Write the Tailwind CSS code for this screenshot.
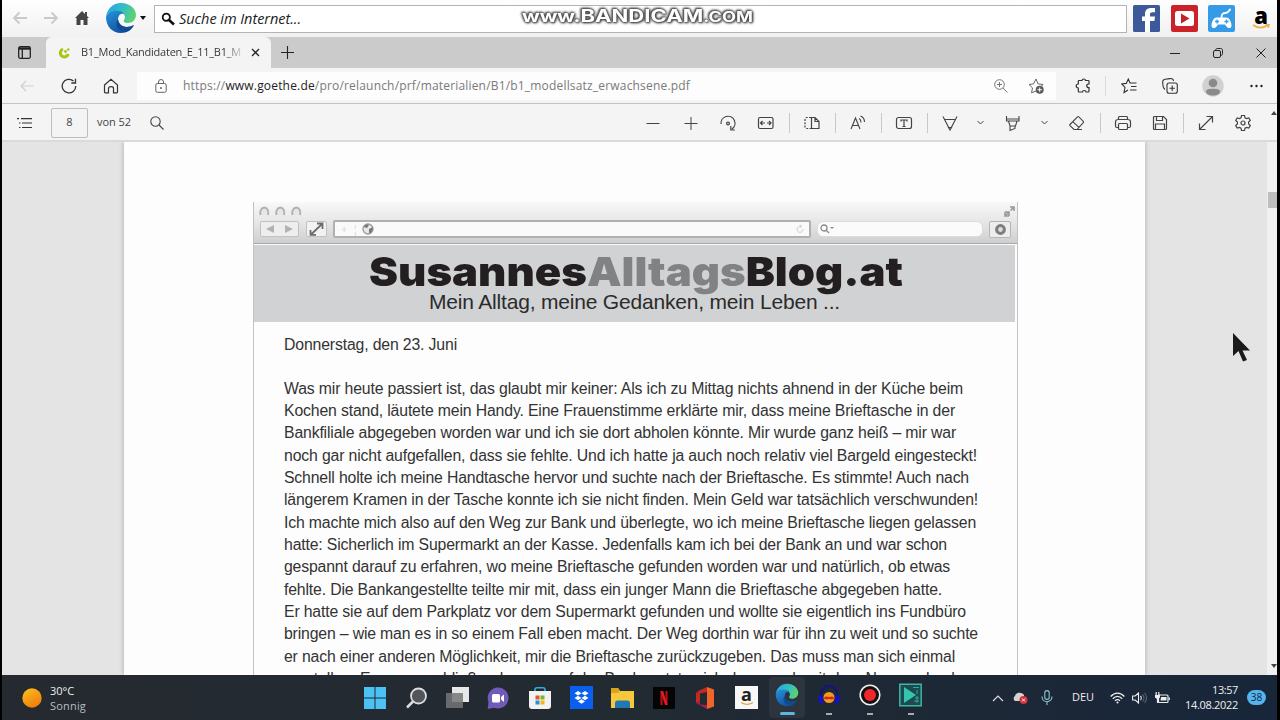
<!DOCTYPE html>
<html lang="de">

<head>
    <meta charset="UTF-8">
    <meta name="viewport" content="width=device-width, initial-scale=1.0">
    <title>B1_Mod_Kandidaten_E_11_B1_M</title>
    <script src="https://cdn.jsdelivr.net/npm/@tailwindcss/browser@4"></script>
</head>

<body class="bg-black overflow-hidden font-['Open_Sans','Noto_Sans',sans-serif]">

    <!-- shared edge logo -->
    <svg class="absolute w-0 h-0">
        <defs>
            <linearGradient id="edgeTop" x1="0" y1="0.3" x2="1" y2="0.6">
                <stop offset="0" stop-color="#2aa5e0" />
                <stop offset="0.5" stop-color="#32bfc4" />
                <stop offset="1" stop-color="#62d36a" />
            </linearGradient>
            <linearGradient id="edgeLow" x1="0" y1="0" x2="0.6" y2="1">
                <stop offset="0" stop-color="#2593dc" />
                <stop offset="1" stop-color="#124f9c" />
            </linearGradient>
            <linearGradient id="sun" x1="0" y1="0" x2="0.6" y2="1">
                <stop offset="0" stop-color="#fcc21c" />
                <stop offset="1" stop-color="#f07f0e" />
            </linearGradient>
            <symbol id="edge" viewBox="0 0 32 32">
                <path d="M1 15C2 7 8 1 16 1c9 0 15 6 15 12 0 5-4 8-8 8-3 0-5-1-4-3 2-2 1-7-4-8C9 8 3 10 1 15z" fill="url(#edgeTop)" />
                <path d="M1 15c2-5 7-7 12-6 3 0 5 1 6 3-4-1-6 2-6 6 1 5 5 7 9 7 3 0 5-1 7-2-2 5-7 8-13 8C7 31 1 24 1 15z" fill="url(#edgeLow)" />
                <path d="M13 17c-4 6 0 12 7 13 4-1 7-4 9-7-7 4-15 2-16-6z" fill="#0f4a94" />
            </symbol>
        </defs>
    </svg>

    <div class="w-[1280px] h-[720px] pl-[2px] pr-[3px] flex flex-col overflow-hidden relative">

        <!-- search bar -->
        <div class="h-[37px] shrink-0 flex items-center bg-gradient-to-b from-[#fefefe] to-[#f1f1f1] pb-px">
            <svg class="ml-[10px] w-4 h-4" viewBox="0 0 16 16" fill="none" stroke="#c9c9c9" stroke-width="1.8"><path d="M15 8H2M7.500 2.500L2 8l5.500 5.500" /></svg>
            <svg class="ml-[15px] w-4 h-4" viewBox="0 0 16 16" fill="none" stroke="#c9c9c9" stroke-width="1.800"><path d="M1 8h13M8.500 2.500L14 8l-5.500 5.500" /></svg>
            <svg class="ml-[15px] w-4 h-4" viewBox="0 0 16 16" fill="#454545"><path d="M8 1L1 8h1.500v7H6.500v-5h3v5h4V8H15l-2-2V2h-2v2z" /></svg>
            <svg class="ml-[15px] w-8 h-8" viewBox="0 0 32 32"><use href="#edge" /></svg>
            <svg class="ml-[3px] w-[6px] h-1" viewBox="0 0 6 4"><path d="M0 0h6L3 4z" fill="#111" /></svg>
            <div class="ml-[8px] w-[973px] h-[28px] mt-[2px] bg-white border border-[#b4b4b4] flex items-center pl-[6px]">
                <svg class="w-[14px] h-[14px]" viewBox="0 0 14 14" fill="none" stroke="#111"><circle cx="5.300" cy="5.200" r="3.600" stroke-width="1.800" /><path d="M8 8l5 4.500" stroke-width="2.600" /></svg>
                <span class="ml-[4px] text-[14.500px] italic text-[#222] whitespace-nowrap" data-w="122">Suche im Internet...</span>
            </div>
            <svg class="ml-[6px] mt-px w-[27px] h-[27px]" viewBox="0 0 27 27"><rect width="27" height="27" rx="1.500" fill="#3c5a9a" /><path d="M12 27V16H9v-4.500h3V9c0-4 2.500-6 6-6h4v4.300h-2.600c-1.600 0-2.400.7-2.400 2v2.200h5l-.6 4.500H17v11z" fill="#fff" /></svg>
            <svg class="ml-[11px] mt-px w-[27px] h-[27px]" viewBox="0 0 27 27"><rect width="27" height="27" rx="2" fill="#cc2229" /><rect x="4" y="6" width="19" height="15" rx="2.500" fill="#fff" /><path d="M10 8.500l8.500 5-8.500 5z" fill="#c4202a" /></svg>
            <svg class="ml-[10px] mt-px w-[27px] h-[27px]" viewBox="0 0 27 27"><rect width="27" height="27" rx="2" fill="#359be6" /><path d="M13.500 13c0-4 1-5 4-5s3-2 5-4" fill="none" stroke="#fff" stroke-width="1.800" /><path d="M8.500 12.500c-3 0-5 5-5 8s3 3.500 5 1l1.500-2h7l1.500 2c2 2.500 5 2 5-1s-2-8-5-8z" fill="#fff" /><path d="M7 16.500h4M9 14.500v4M16.500 16.500h4M18.500 14.500v4" stroke="#359be6" stroke-width="1.300" /></svg>
            <div class="ml-[14px] w-[24px] h-[28px] flex flex-col items-center">
                <span class="font-['Open_Sans'] font-extrabold text-[22px] leading-[22px] text-black">a</span>
                <svg class="-mt-[2px] w-[18px] h-[5px] shrink-0" viewBox="0 0 18 5" fill="none" stroke="#e9b04f" stroke-width="1.600"><path d="M1 1c5 3.500 10 3.500 15 0M13.500.8h3.500l-1 3" /></svg>
            </div>
        </div>

        <!-- tab strip -->
        <div class="h-[31px] shrink-0 flex items-center bg-[#cbcbcb]">
            <svg class="ml-[16px] w-[13px] h-[13px]" viewBox="0 0 13 13" fill="none" stroke="#222" stroke-width="1.300"><rect x=".7" y=".7" width="11.600" height="11.600" rx="1.500" /><path d="M1 2.500h11" stroke-width="2.400" /><path d="M4.300 3v9" /></svg>
            <div class="ml-[15px] w-[225px] h-full bg-[#f4f4f4] rounded-t-md flex items-center">
                <svg class="ml-[12px] w-[12px] h-[12px]" viewBox="0 0 12 12"><path d="M5 2.200A4 4 0 1 0 10.200 7" fill="none" stroke="#a3c614" stroke-width="3" /><circle cx="7.500" cy="4.500" r="1.400" fill="#a3c614" /><circle cx="10.300" cy="2.500" r="1.200" fill="#a3c614" /></svg>
                <div class="ml-[11px] w-[162px] bg-gradient-to-r from-[#333] from-88% to-[#e4e4e4] bg-clip-text text-transparent"><span class="block w-fit text-[11px] whitespace-nowrap" data-w="160">B1_Mod_Kandidaten_E_11_B1_M</span></div>
                <svg class="ml-[8px] w-[9px] h-[9px]" viewBox="0 0 9 9" stroke="#222" stroke-width="1.300"><path d="M1 1l7 7M8 1L1 8" /></svg>
            </div>
            <svg class="ml-[10px] w-[13px] h-[13px]" viewBox="0 0 13 13" stroke="#222" stroke-width="1.100"><path d="M6.500 0v13M0 6.500h13" /></svg>
            <svg class="ml-auto w-[10px] h-[10px]" viewBox="0 0 10 10" stroke="#222"><path d="M0 5.500h10" /></svg>
            <svg class="ml-[33px] w-[10px] h-[10px]" viewBox="0 0 10 10" fill="none" stroke="#222"><rect x=".5" y="2.500" width="7" height="7" rx="1.500" /><path d="M2.500 2.500c0-1 .5-2 2-2h3c1.500 0 2 .8 2 2v3c0 1-.5 2-2 2" /></svg>
            <svg class="ml-[33px] mr-[11px] w-[10px] h-[10px]" viewBox="0 0 10 10" stroke="#222"><path d="M.5.500l9 9M9.500.500l-9 9" /></svg>
        </div>

        <!-- address row -->
        <div class="h-[36px] shrink-0 flex items-center bg-[#f4f4f4] border-b border-[#c3c3c3] text-[#333]">
            <svg class="ml-[18px] w-[14px] h-[12px]" viewBox="0 0 14 12" fill="none" stroke="#cfcfcf" stroke-width="1.200"><path d="M14 6H1M6 1L1 6l5 5" /></svg>
            <svg class="ml-[27px] w-4 h-4" viewBox="0 0 16 16" fill="none" stroke="currentColor" stroke-width="1.300"><path d="M14.800 8A6.800 6.800 0 1 1 12.500 3M14.500.8V5h-4.200" /></svg>
            <svg class="ml-[26px] w-4 h-4" viewBox="0 0 16 16" fill="none" stroke="currentColor" stroke-width="1.200"><path d="M1.500 7L8 1.300 14.500 7v7c0 .5-.3.800-.8.800H10.500V10.500c0-1.200-.8-1.800-2.500-1.800s-2.500.6-2.500 1.800v4.300H2.300c-.5 0-.8-.3-.8-.8z" /></svg>
            <div class="ml-[18px] w-[919px] h-[28px] bg-[#fdfdfd] flex items-center">
                <svg class="ml-[18px] w-3 h-[14px]" viewBox="0 0 12 14" fill="none" stroke="#666"><rect x=".8" y="4.500" width="10.400" height="8.800" rx="1.500" /><path d="M3.500 4.500V3a2.500 2.500 0 0 1 5 0v1.500" /><circle cx="6" cy="9" r=".6" fill="#666" /></svg>
                <span class="ml-[16px] text-xs text-[#7a7a7a] whitespace-nowrap" data-w="507">https://<b class="font-normal text-[#222]">www.goethe.de</b>/pro/relaunch/prf/materialien/B1/b1_modellsatz_erwachsene.pdf</span>
                <svg class="ml-auto w-[14px] h-[14px]" viewBox="0 0 14 14" fill="none" stroke="#777"><circle cx="5.500" cy="5.500" r="4.800" /><path d="M9 9l4.500 4.500M5.500 3v5M3 5.500h5" /></svg>
                <svg class="ml-[20px] mr-[12px] w-4 h-4" viewBox="0 0 16 16" fill="none" stroke="#666"><path d="M8 13l-4.500 1.800 1-4.900L1 6.500l4.500-.600L8 1l2 4.900 5 .6-1.500 1.500" /><circle cx="11.700" cy="11.700" r="4" fill="#5a5a5a" stroke="none" /><path d="M11.700 9.500v4.400M9.500 11.700h4.400" stroke="#fff" /></svg>
            </div>
            <svg class="ml-[19px] w-4 h-4" viewBox="0 0 16 16" fill="none" stroke="currentColor" stroke-width="1.200"><path d="M4 2.500h3c0-2 3.500-2 3.500 0h2.800c.4 0 .7.300.7.700v2.600c-3 0-3 3.900 0 3.900v3.600c0 .4-.3.700-.7.700H11c0-2-3.500-2-3.500 0H4c-.4 0-.7-.3-.7-.7V10C.5 10 .5 6 3.300 6V3.200c0-.4.3-.7.700-.7z" /></svg>
            <i class="ml-[14px] w-px h-5 bg-[#dadada]"></i>
            <svg class="ml-[15px] w-4 h-4" viewBox="0 0 16 16" fill="none" stroke="currentColor" stroke-width="1.100"><path d="M7 12l-4 2.500 1-5L.8 6l4.500-.6L7.300 1 9 5h6.500M10 8.500h5.500M9 12h6.500" /></svg>
            <svg class="ml-[25px] w-4 h-4" viewBox="0 0 16 16" fill="none" stroke="currentColor" stroke-width="1.100"><rect x="5" y="5" width="10.300" height="10.300" rx="2" /><path d="M10.200 7.500v5.400M7.500 10.200h5.400M3 11.500C1.500 10.500.7 7 .7 4 .7 2 1.500 1.500 3 1.200L8 .6c2-.2 3.500.6 3.500 2.400" /></svg>
            <svg class="ml-[24px] w-[22px] h-[22px]" viewBox="0 0 22 22"><circle cx="11" cy="11" r="10.700" fill="#d0d0d0" /><circle cx="11" cy="8" r="4.300" fill="#8a8a8a" /><path d="M4 16c0-3 14-3 14 0 0 3-3 4.500-7 4.500S4 19 4 16z" fill="#8a8a8a" /></svg>
            <svg class="ml-[26px] w-[13px] h-1" viewBox="0 0 13 4" fill="#222"><circle cx="1.500" cy="2" r="1.200" /><circle cx="6.500" cy="2" r="1.200" /><circle cx="11.500" cy="2" r="1.200" /></svg>
        </div>

        <!-- pdf toolbar -->
        <div class="h-[38px] shrink-0 flex items-center bg-[#f4f4f4] border-b-2 border-[#dadada] text-[#444] pt-px">
            <svg class="ml-[15px] w-4 h-3" viewBox="0 0 16 12" stroke="#333" stroke-width="1.200"><path d="M4 1.600h11M5 6h10M5 10.500h10M0 1.600h2M2 6h1.500M2 10.500h1.500" /></svg>
            <div class="ml-[18px] w-[37px] h-[30px] border border-[#bdbdbd] rounded-xs flex items-center justify-center text-[11px]">8</div>
            <span class="ml-[9px] text-[11px] whitespace-nowrap" data-w="34">von 52</span>
            <svg class="ml-[19px] w-[14px] h-[14px]" viewBox="0 0 14 14" fill="none" stroke="currentColor" stroke-width="1.100"><circle cx="5.500" cy="5.500" r="4.700" /><path d="M9 9l4.500 4.500" /></svg>
            <svg class="ml-auto w-[18px] h-[18px]" viewBox="0 0 18 18" stroke="currentColor"><path d="M2.500 9.500h13" /></svg>
            <svg class="ml-[20px] w-[18px] h-[18px]" viewBox="0 0 18 18" stroke="currentColor"><path d="M2.500 9.500h13M9 3v13" /></svg>
            <svg class="ml-[19px] w-[18px] h-[18px]" viewBox="0 0 18 18" fill="none" stroke="currentColor" stroke-width="1.200"><path d="M2 10A7 7 0 1 1 13 15M11.800 12v4h4" /><circle cx="9" cy="9.500" r="1.400" /></svg>
            <svg class="ml-[20px] w-[18px] h-[18px]" viewBox="0 0 18 18" fill="none" stroke="currentColor" stroke-width="1.200"><rect x="1.500" y="3.500" width="14.500" height="11" rx="1.500" /><path d="M3.500 9H8M10 9h4M5.500 7l-2 2 2 2M12 7l2 2-2 2" /></svg>
            <i class="ml-[14px] w-px h-5 bg-[#c8c8c8]"></i>
            <svg class="ml-[13px] w-[18px] h-[18px]" viewBox="0 0 18 18" fill="none" stroke="currentColor" stroke-width="1.200"><path d="M8.500 3.500H12l4 4v7H8.500zM12 3.500v4h4" /><path d="M8 3.500H3.500A1.500 1.500 0 0 0 2 5v8a1.500 1.500 0 0 0 1.500 1.500H8" stroke-dasharray="2 1.300" /></svg>
            <i class="ml-[14px] w-px h-5 bg-[#c8c8c8]"></i>
            <svg class="ml-[13px] w-[18px] h-[18px]" viewBox="0 0 18 18" fill="none" stroke="currentColor" stroke-width="1.100"><path d="M2 15L6.500 4 11 15M3.500 11.500h6M10 4.500c1.500.7 2 2 2 4M11.500 2c2.500 1 4 3 4 6" /></svg>
            <i class="ml-[14px] w-px h-5 bg-[#c8c8c8]"></i>
            <svg class="ml-[13px] w-[18px] h-[18px]" viewBox="0 0 18 18" fill="none" stroke="currentColor" stroke-width="1.200"><rect x="1.500" y="3.500" width="15" height="11" rx="2" /><path d="M6 7.500V6h6v1.500M9 6v6.500M7.500 12.500h3" /></svg>
            <i class="ml-[14px] w-px h-5 bg-[#c8c8c8]"></i>
            <svg class="ml-[13px] w-[18px] h-[18px]" viewBox="0 0 18 18" fill="none" stroke="currentColor" stroke-width="1.100"><path d="M2 2.500L9 16l7-13.500M3 5.500h12M7.500 13.500L9 16l1.500-2.500z" /></svg>
            <svg class="ml-[17px] w-[9px] h-[9px]" viewBox="0 0 9 9" fill="none" stroke="currentColor"><path d="M1.500 3l3 3 3-3" /></svg>
            <svg class="ml-[19px] w-[18px] h-[18px]" viewBox="0 0 18 18" fill="none" stroke="currentColor" stroke-width="1.100"><path d="M2.500 2v5h12.500V2M2.500 5h12.500M4.500 7l1.500 5h5.500l1.500-5M6 12v4.500l5-2V12" /></svg>
            <svg class="ml-[18px] w-[9px] h-[9px]" viewBox="0 0 9 9" fill="none" stroke="currentColor"><path d="M1.500 3l3 3 3-3" /></svg>
            <svg class="ml-[19px] w-[18px] h-[18px]" viewBox="0 0 18 18" fill="none" stroke="currentColor" stroke-width="1.100"><path d="M2 10.500l7.500-7.700c.4-.4.900-.4 1.300 0l4.500 4.500c.4.400.4.900 0 1.300L9 15.500H6L2 11.700c-.4-.4-.4-.8 0-1.200zM5 7.800l6.200 5.800M9 15.500h5" /></svg>
            <i class="ml-[14px] w-px h-5 bg-[#c8c8c8]"></i>
            <svg class="ml-[13px] w-[18px] h-[18px]" viewBox="0 0 18 18" fill="none" stroke="currentColor" stroke-width="1.200"><path d="M4.500 5.500V3.500c0-.5.300-1 1-1h7c.7 0 1 .5 1 1v2M4.500 13.500H3c-1 0-1.500-.5-1.500-1.500V8C1.500 6.500 2.500 5.500 4 5.500h10c1.500 0 2.500 1 2.500 2.500v4c0 1-.5 1.500-1.500 1.500h-1.500" /><rect x="4.500" y="9.500" width="9" height="6" rx="1" /></svg>
            <svg class="ml-[19px] w-[18px] h-[18px]" viewBox="0 0 18 18" fill="none" stroke="currentColor" stroke-width="1.200"><path d="M3.500 2.500h9L15.500 5.500v9c0 .6-.4 1-1 1h-11c-.6 0-1-.4-1-1v-11c0-.6.400-1 1-1zM5.500 2.500V6.500h6v-4M4.500 15.500V10h9v5.500" /></svg>
            <i class="ml-[14px] w-px h-5 bg-[#c8c8c8]"></i>
            <svg class="ml-[13px] w-[18px] h-[18px]" viewBox="0 0 18 18" fill="none" stroke="currentColor" stroke-width="1.200"><path d="M2.500 15.500l13-13M9.500 2.500h6v6M2.500 9.500v6h6" /></svg>
            <svg class="ml-[19px] w-[18px] h-[18px]" viewBox="0 0 18 18" fill="none" stroke="currentColor" stroke-width="1.200"><path d="M7.500 1.500h3l.5 2.300 1.500.8 2.300-.7 1.500 2.500-1.700 1.700v1.800l1.700 1.700-1.500 2.500-2.300-.7-1.500.8-.5 2.300h-3L7 14.200l-1.500-.8-2.300.7-1.500-2.500 1.700-1.700V8.100L1.700 6.400l1.500-2.500 2.300.7L7 3.800z" /><circle cx="9" cy="9" r="2" /></svg>
            <svg class="ml-[19px] mb-[19px] w-[6px] h-1 shrink-0" viewBox="0 0 6 4"><path d="M0 4l3-4 3 4z" fill="#444" /></svg>
        </div>

        <!-- document viewport -->
        <div class="h-[533px] shrink-0 flex bg-[#e4e4e4] overflow-hidden">
            <div class="ml-[122px] w-[1021px] shrink-0 bg-[#fdfdfd] shadow-[0_0_5px_rgba(0,0,0,0.25)] pt-[60px] pl-[129px]">
                <div class="w-[765px] h-[600px] border-x border-[#c2c2c2]">

                    <!-- old browser chrome -->
                    <div class="h-[42px] bg-gradient-to-b from-[#f8f8f8] via-[#e6e6e6] to-[#cfcfcf] border-b border-[#a5a8a8]">
                        <div class="h-[18px] flex items-center pl-[5px]">
                            <svg class="w-[44px] h-[10px]" viewBox="0 0 44 10" fill="#e6e6e6" stroke="#b0b0b0" stroke-width="1.800"><path d="M1.500 9C.500 5 2.500 1.500 5.300 1.500S10 5 9 9M17.500 9C16.500 5 18.500 1.500 21.300 1.500S26 5 25 9M33.500 9C32.500 5 34.500 1.500 37.300 1.500S42 5 41 9" /></svg>
                            <svg class="ml-auto mr-[2px] w-[11px] h-[11px]" viewBox="0 0 11 11" fill="none" stroke="#999" stroke-width="1.600"><path d="M6 1h4v4M10 1L6.500 4.500M5 10H1V6M4.500 6.500L1 10M1 6h4v4" /></svg>
                        </div>
                        <div class="h-[18px] flex items-center">
                            <div class="ml-[6px] w-[39px] h-[16px] bg-[#eee] border border-[#c0c0c0] rounded-xs flex items-center justify-around">
                                <svg class="w-2 h-2" viewBox="0 0 8 8" fill="#b2b2b2"><path d="M8 0v8L0 4z" /></svg>
                                <svg class="w-2 h-2" viewBox="0 0 8 8" fill="#b2b2b2"><path d="M0 0v8l8-4z" /></svg>
                            </div>
                            <div class="ml-[7px] w-[21px] h-[16px] bg-[#f2f2f2] border border-[#c0c0c0] rounded-xs flex items-center justify-center">
                                <svg class="w-[15px] h-[14px]" viewBox="0 0 15 14" fill="none" stroke="#6c6c6c" stroke-width="1.800"><path d="M2 12.500L13 2M8 1.500h5.500V7M1.500 8v4.800H7" /></svg>
                            </div>
                            <div class="ml-[6px] w-[478px] h-[18px] bg-[#fafafa] border-2 border-[#b0b0b0] rounded-xs flex items-center text-[#d5d5d5] text-[11px]">
                                <span class="ml-[6px]">+</span>
                                <span class="ml-[5px]">¦</span>
                                <svg class="ml-[4px] w-3 h-3" viewBox="0 0 12 12"><circle cx="6" cy="6" r="5" fill="#e8e8e8" stroke="#9a9a9a" stroke-width="1.300" /><path d="M2 4c1-3 4-3 5-2L5 5zM7 6l4-2c0 4-2 6-4 6z" fill="#777" /></svg>
                                <svg class="ml-auto mr-[5px] w-2 h-[10px]" viewBox="0 0 8 10" fill="none" stroke="#ccc"><path d="M7 5A3 3 0 1 1 5 2.500M4 .5l1.500 2-2 1.500" /></svg>
                            </div>
                            <div class="ml-[6px] w-[166px] h-[16px] bg-[#fbfbfb] border border-[#dcdcdc] rounded-md flex items-center">
                                <svg class="ml-[2px] w-[14px] h-[10px]" viewBox="0 0 14 10" fill="none" stroke="#888" stroke-width="1.300"><circle cx="4" cy="4" r="3" /><path d="M6 6l3 3" /><path d="M10 3h4l-2 2z" fill="#888" stroke="none" /></svg>
                            </div>
                            <div class="ml-[6px] w-[22px] h-[17px] bg-[#ededed] border border-[#b5b5b5] rounded-xs flex items-center justify-center">
                                <svg class="w-[11px] h-[11px]" viewBox="0 0 11 11"><circle cx="5.500" cy="5.500" r="3.900" fill="#ddd" stroke="#7d7d7d" stroke-width="3" /></svg>
                            </div>
                        </div>
                    </div>

                    <div class="mt-px mr-[2px] h-[77px] bg-[#d0d2d3] flex flex-col font-['Liberation_Sans',sans-serif]">
                        <h1 class="ml-[115px] mt-[7px] w-fit origin-left font-['Inter',sans-serif] font-black text-[40px] leading-[40px] text-[#231f20] whitespace-nowrap" data-stretch="534">Susannes<span class="text-[#808284]">Alltags</span>Blog.at</h1>
                        <p class="ml-[175px] -mt-px w-fit text-[21px] leading-[22px] text-[#2b2b2b] whitespace-nowrap" data-w="411">Mein Alltag, meine Gedanken, mein Leben ...</p>
                    </div>

                    <div class="pl-[30px] pt-[11.500px] font-['Liberation_Sans',sans-serif] text-[15.800px] leading-[22.330px] text-[#333] whitespace-nowrap">
                        <p class="w-fit mb-[22px]" data-w="173">Donnerstag, den 23. Juni</p>
                        <p class="w-fit" data-w="679">Was mir heute passiert ist, das glaubt mir keiner: Als ich zu Mittag nichts ahnend in der Küche beim</p>
                        <p class="w-fit" data-w="671">Kochen stand, läutete mein Handy. Eine Frauenstimme erklärte mir, dass meine Brieftasche in der</p>
                        <p class="w-fit" data-w="672">Bankfiliale abgegeben worden war und ich sie dort abholen könnte. Mir wurde ganz heiß – mir war</p>
                        <p class="w-fit" data-w="693">noch gar nicht aufgefallen, dass sie fehlte. Und ich hatte ja auch noch relativ viel Bargeld eingesteckt!</p>
                        <p class="w-fit" data-w="685">Schnell holte ich meine Handtasche hervor und suchte nach der Brieftasche. Es stimmte! Auch nach</p>
                        <p class="w-fit" data-w="694">längerem Kramen in der Tasche konnte ich sie nicht finden. Mein Geld war tatsächlich verschwunden!</p>
                        <p class="w-fit" data-w="692">Ich machte mich also auf den Weg zur Bank und überlegte, wo ich meine Brieftasche liegen gelassen</p>
                        <p class="w-fit" data-w="663">hatte: Sicherlich im Supermarkt an der Kasse. Jedenfalls kam ich bei der Bank an und war schon</p>
                        <p class="w-fit" data-w="666">gespannt darauf zu erfahren, wo meine Brieftasche gefunden worden war und natürlich, ob etwas</p>
                        <p class="w-fit" data-w="658">fehlte. Die Bankangestellte teilte mir mit, dass ein junger Mann die Brieftasche abgegeben hatte.</p>
                        <p class="w-fit" data-w="682">Er hatte sie auf dem Parkplatz vor dem Supermarkt gefunden und wollte sie eigentlich ins Fundbüro</p>
                        <p class="w-fit" data-w="694">bringen – wie man es in so einem Fall eben macht. Der Weg dorthin war für ihn zu weit und so suchte</p>
                        <p class="w-fit" data-w="671">er nach einer anderen Möglichkeit, mir die Brieftasche zurückzugeben. Das muss man sich einmal</p>
                        <p class="w-fit" data-w="676">vorstellen: Er war anschließend sogar auf der Bank, setzte sich dann noch mit dem Namen durch</p>
                    </div>
                </div>
            </div>
            <!-- scrollbar -->
            <div class="ml-auto w-[10px] bg-[#f0f0f0] flex flex-col items-end">
                <div class="mt-[50px] w-[9px] h-4 bg-[#bdbdbd]"></div>
                <svg class="mt-auto mb-[7px] w-[6px] h-1" viewBox="0 0 6 4"><path d="M0 0h6L3 4z" fill="#444" /></svg>
            </div>
        </div>

        <!-- taskbar -->
        <div class="h-[45px] shrink-0 flex items-center bg-gradient-to-r from-[#252a30] via-[#222a32] to-[#18263a] text-[#eee]">
            <svg class="ml-[20px] w-5 h-5" viewBox="0 0 20 20"><circle cx="10" cy="10" r="9.700" fill="url(#sun)" /></svg>
            <div class="ml-[8px] w-[60px] text-[11px] leading-[15px]">
                <p class="w-fit whitespace-nowrap" data-w="24">30°C</p>
                <p class="w-fit whitespace-nowrap text-[#b9bcc0]" data-w="36">Sonnig</p>
            </div>
            <svg class="ml-[254px] w-[22px] h-[22px]" viewBox="0 0 22 22" fill="#4cc2f4"><path d="M0 0h10.500v10.500H0zM11.500 0H22v10.500H11.500zM0 11.500h10.500V22H0zM11.500 11.500H22V22H11.500z" /></svg>
            <svg class="ml-[20px] w-[22px] h-[22px]" viewBox="0 0 22 22" fill="none" stroke="#ddd"><circle cx="12.500" cy="9" r="7.500" fill="#50565c" stroke-width="1.800" /><path d="M7 14.500L1 20.500" stroke-width="2.500" /></svg>
            <svg class="ml-[18px] w-[23px] h-[22px]" viewBox="0 0 23 22"><path d="M6 0h17v15H6z" fill="#e8e8e8" /><path d="M0 6h17v15H0z" fill="#747678" fill-opacity=".85" /></svg>
            <svg class="ml-[18px] w-[22px] h-[22px]" viewBox="0 0 22 22"><path d="M11 .5a10.500 10.500 0 1 1-4 20.200L.7 22 1.500 15A10.500 10.500 0 0 1 11 .5z" fill="#6f5cb8" /><rect x="5" y="7" width="8" height="8.500" rx="1.500" fill="#fff" /><path d="M14 10l3-2.500v7.500l-3-2.500z" fill="#fff" /></svg>
            <svg class="ml-[20px] w-[22px] h-[22px]" viewBox="0 0 22 22"><path d="M6 5V2.500C6 1 7 .8 8 .8h6c1 0 2 .2 2 1.700V5" fill="none" stroke="#2eaee0" stroke-width="1.600" /><path d="M0 4h22v15a3 3 0 0 1-3 3H3a3 3 0 0 1-3-3z" fill="#f2f2f2" /><path d="M6.500 8.500h4v4h-4z" fill="#e0592a" /><path d="M11.500 8.500h4v4h-4z" fill="#7fb52e" /><path d="M6.500 13.500h4v4h-4z" fill="#2d8fd6" /><path d="M11.500 13.500h4v4h-4z" fill="#f2b41f" /></svg>
            <svg class="ml-[19px] w-[23px] h-[23px]" viewBox="0 0 23 23"><path d="M0 0h23v23H0z" fill="#0a5fee" /><path d="M8 5l3.500 2.300L8 9.500 4.500 7.300zM15 5l3.500 2.300L15 9.500l-3.500-2.200zM8 9.700l3.500 2.300L8 14.200 4.500 12zM15 9.700l3.500 2.300-3.500 2.200-3.500-2.200zM11.500 13.200l3.500 2.200-3.500 2.300L8 15.400z" fill="#fff" /></svg>
            <svg class="ml-[18px] w-[23px] h-[22px]" viewBox="0 0 23 22"><path d="M0 1h7l2 3h14v17H0z" fill="#f7c83c" /><path d="M0 1h7l2 3-2 2H0z" fill="#dca31f" /><path d="M4 21v-5c0-1.500 1-2.500 2.500-2.500h10c1.500 0 2.500 1 2.500 2.500v5z" fill="#2277b5" /></svg>
            <svg class="ml-[19px] w-[22px] h-[22px]" viewBox="0 0 22 22"><path d="M0 0h22v22H0z" fill="#050505" /><path d="M8.500 4v14M13.500 4v14" stroke="#b01018" stroke-width="2.200" /><path d="M7.500 4h2.600l4.500 14H12z" fill="#e31b23" /></svg>
            <svg class="ml-[21px] w-[18px] h-[22px]" viewBox="0 0 18 22"><path d="M11 0l7 2.500v17L11 22z" fill="#f0652a" /><path d="M11 0L3 3.500 0 6v10l4-2V6.500L11 5z" fill="#c22a20" /><path d="M0 16l4-2v3.500l7 .5v4z" fill="#a02050" /></svg>
            <div class="ml-[21px] w-[23px] h-[23px] bg-[#f7f7f7] flex flex-col items-center">
                <span class="font-bold text-[18px] leading-[16px] text-[#222]">a</span>
                <svg class="w-3 h-[3px]" viewBox="0 0 12 3" fill="none" stroke="#e9a33b" stroke-width="1.200"><path d="M0 .5c4 2.500 8 2.500 12 0" /></svg>
            </div>
            <div class="ml-[11px] w-[36px] h-[41px] bg-[#2c343d] rounded-sm flex flex-col items-center pt-[6px]">
                <svg class="w-6 h-6" viewBox="0 0 32 32"><use href="#edge" /></svg>
                <i class="mt-[5px] w-[15px] h-[3px] rounded-full bg-[#5fb4e4]"></i>
            </div>
            <div class="ml-[12px] h-[41px] flex flex-col items-center pt-[6px]">
                <svg class="w-6 h-6" viewBox="0 0 24 24"><path d="M3.500 14C3 7 7 3 12 3s9 4 8.500 11" fill="none" stroke="#14147e" stroke-width="2" /><path d="M1 13h5v7.500H2.500zM18 13h5l-1.500 7.500H18z" fill="#1212c8" /><circle cx="12" cy="14.500" r="5.500" fill="#f59b1e" /><path d="M6 15l3-1.500 3 .5 3-.5 3 1.500-3 1.500-3-.5-3 .5z" fill="#d5281c" /></svg>
                <i class="mt-[6px] w-[6px] h-[2px] bg-[#a7abb0]"></i>
            </div>
            <div class="ml-[18px] h-[41px] flex flex-col items-center pt-[6px]">
                <svg class="w-[22px] h-6" viewBox="0 0 22 24"><circle cx="11" cy="12" r="9.800" fill="#111" stroke="#eee" stroke-width="1.600" /><circle cx="11" cy="12" r="6" fill="#f0282e" /></svg>
                <i class="mt-[6px] w-[6px] h-[2px] bg-[#a7abb0]"></i>
            </div>
            <div class="ml-[18px] h-[41px] flex flex-col items-center pt-[6px]">
                <svg class="w-[23px] h-6" viewBox="0 0 23 24"><path d="M.8 1.300h21.400v21.400H.8z" fill="#1d4a50" stroke="#3fb5a3" stroke-width="1.500" /><path d="M5 4l12 8-12 8z" fill="#35c4ae" /><path d="M14 4.500h6M18 7v4M16 15h4M15 18h5M18 13v7" stroke="#35a897" /></svg>
                <i class="mt-[6px] w-[6px] h-[2px] bg-[#a7abb0]"></i>
            </div>
            <svg class="ml-auto w-3 h-2" viewBox="0 0 12 8" fill="none" stroke="#ddd" stroke-width="1.200"><path d="M1 7l5-5 5 5" /></svg>
            <svg class="ml-[8px] w-4 h-3" viewBox="0 0 16 12"><path d="M3 9a3 3 0 0 1 0-5c1-4 7-4 9-1v6z" fill="#d2d2d2" /><circle cx="11.500" cy="8" r="4" fill="#d6303a" /><path d="M10 6.500l3 3M13 6.500l-3 3" stroke="#fff" /></svg>
            <svg class="ml-[13px] w-3 h-[15px]" viewBox="0 0 12 15" fill="none" stroke="#8cc5d0" stroke-width="1.100"><rect x="3.800" y=".6" width="4.400" height="8.800" rx="2.200" /><path d="M1 6.500c0 7 10 7 10 0M6 11.800V15" /></svg>
            <span class="ml-[19px] text-[11px] whitespace-nowrap" data-w="22">DEU</span>
            <svg class="ml-[16px] w-[15px] h-[12px]" viewBox="0 0 15 12" fill="none" stroke="#eee" stroke-width="1.300"><path d="M.7 4.500c4-4.500 9.600-4.500 13.600 0M2.800 6.700c3-3 6.400-3 9.400 0M5 8.900c1.500-1.500 3.500-1.500 5 0" /><circle cx="7.500" cy="10.500" r="1" fill="#eee" stroke="none" /></svg>
            <svg class="ml-[7px] w-[15px] h-3" viewBox="0 0 15 12" fill="none" stroke="#eee" stroke-width="1.100"><path d="M.6 4h2.600L6.500 1v10L3.200 8H.6zM8.500 4c1 1 1 3 0 4" /><path d="M10.500 2.500c2 2 2 5 0 7M12.500 1c2.500 3 2.500 7 0 10" stroke="#56606e" /></svg>
            <svg class="ml-[8px] w-[15px] h-3" viewBox="0 0 15 12" fill="none" stroke="#eee" stroke-width="1.200"><rect x="3.500" y="3" width="9.500" height="7.500" rx="1" /><path d="M6 5h5.500v3.500H5.500zM0 3h5v2.500L3 7H2L0 5.500z" fill="#eee" stroke="none" /><path d="M1.200 0v3M3.800 0v3M2.500 6.500V10.500h1M14.300 5.500v2.500" /></svg>
            <div class="ml-[14px] w-[54px] flex flex-col items-end text-[11px] leading-[15px] pb-px">
                <p class="w-fit whitespace-nowrap" data-w="26">13:57</p>
                <p class="w-fit whitespace-nowrap" data-w="53">14.08.2022</p>
            </div>
            <div class="ml-[9px] mr-[11px] w-[19px] h-[15px] rounded-full bg-[#55b3ee] text-[#10263c] text-[10px] leading-[15px] text-center">38</div>
        </div>

        <!-- recorder watermark -->
        <div class="absolute left-[522px] top-[4px] origin-left font-['Inter',sans-serif] font-bold text-white text-[17px] leading-[24px] whitespace-nowrap [text-shadow:0_0_2px_#444,0_0_2px_#444,1px_1px_2px_#555,-1px_-1px_2px_#555,0_0_3px_#666]" data-stretch="231"><span class="text-[16px]">www.</span>BANDICAM<span class="text-[14px]">.COM</span></div>

        <!-- mouse pointer -->
        <svg class="absolute left-[1232px] top-[332px] w-[19px] h-[31px]" viewBox="0 0 19 31"><path d="M1 1v23l5.500-5L11 29.500l4-1.500-4.500-9.500H18z" fill="#1a1a1a" /></svg>
    </div>

    <script>
        document.fonts.ready.then(() => {
            // spread the letters so that each text fills its data-w pixels
            document.querySelectorAll('[data-w]').forEach(el => {
                const diff = Number(el.dataset.w) - el.getBoundingClientRect().width;
                el.style.letterSpacing = (diff / el.textContent.length) + 'px';
            });

            // the extended faces are widened instead of spaced out
            document.querySelectorAll('[data-stretch]').forEach(el => {
                el.style.transform = `scaleX(${Number(el.dataset.stretch) / el.getBoundingClientRect().width})`;
            });
        });
    </script>
</body>

</html>
